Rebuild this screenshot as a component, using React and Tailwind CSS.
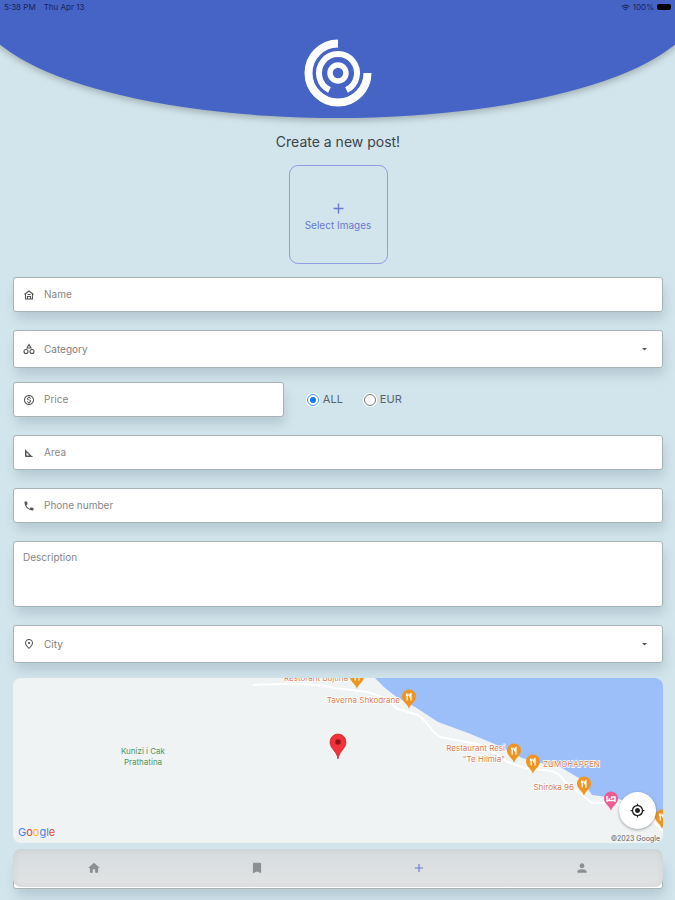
import {
  MdAdd,
  MdBookmark,
  MdHome,
  MdMyLocation,
  MdOutlineMonetizationOn,
  MdOutlinePlace,
  MdPerson,
  MdPhone,
  MdSquareFoot,
  MdWifi,
} from 'react-icons/md';

const fieldBox =
  'flex items-center rounded-[3px] border border-[#a9b3b6] bg-white shadow-[2px_8px_12px_-1px_rgba(60,90,110,0.2)]';
const fieldText =
  'w-full min-w-0 bg-transparent text-[10px] text-[#808080] outline-none placeholder:text-[#868686]';

const places = [
  { x: 344, y: -1, label: ['Restorant Bujtina'], lx: 335, ly: 3 },
  { x: 396, y: 19, label: ['Taverna Shkodrane'], lx: 387, ly: 25 },
  { x: 501, y: 73, label: ['Restaurant Resi', '"Te Hilmia"'], lx: 492, ly: 73 },
  { x: 520, y: 84, label: ['ZUMOHAPPEN'], lx: 530, ly: 89, side: 'start' },
  { x: 571, y: 106, label: ['Shiroka 96'], lx: 561, ly: 112 },
  { x: 649, y: 139, label: [], lx: 0, ly: 0 },
];

const tabs = [
  { name: 'Home', Icon: MdHome },
  { name: 'Saved', Icon: MdBookmark },
  { name: 'New post', Icon: MdAdd, active: true },
  { name: 'Profile', Icon: MdPerson },
];

function HouseIcon({ size, className }) {
  return (
    <svg width={size} height={size} viewBox="0 0 24 24" className={className} fill="none" stroke="currentColor" strokeWidth="2.2">
      <path d="M3 11L12 4l9 7" />
      <path d="M5 9.500V20h14V9.500" />
      <path d="M9 20v-5h6v5M9 11h6" />
    </svg>
  );
}

function ShapesIcon({ size, className }) {
  return (
    <svg width={size} height={size} viewBox="0 0 24 24" className={className} fill="none" stroke="currentColor" strokeWidth="2.2">
      <path d="M12 3l4 7H8z" />
      <circle cx="6" cy="17" r="4" />
      <circle cx="18" cy="17" r="4" />
    </svg>
  );
}

function Logo() {
  return (
    <svg width="68" height="68" viewBox="-34 -34 68 68" fill="none" stroke="#fff" aria-hidden="true">
      <path d="M0 -29.5A29.5 29.5 0 1 0 29.5 0" strokeWidth="8" />
      <path d="M-8.5 17A19 19 0 1 1 8.5 17" strokeWidth="6" />
      <circle r="8" strokeWidth="5.5" />
    </svg>
  );
}

function Header() {
  return (
    <header className="overflow-hidden pb-3">
      <div className="-mx-[3.5%] rounded-b-[50%_97%] bg-[#4663c6] px-[3.5%] pb-[11px] shadow-[0_3px_6px_rgba(70,80,80,0.35)]">
        <div className="flex h-[14px] items-center justify-between px-1 text-[8px] text-[#16245c]">
          <div className="flex gap-2">
            <span>5:38 PM</span>
            <span>Thu Apr 13</span>
          </div>
          <div className="flex items-center gap-[3px]">
            <MdWifi size={9} />
            <span>100%</span>
            <span className="h-[6px] w-[14px] rounded-[2px] bg-black" />
          </div>
        </div>
        <div className="flex justify-center pt-[25px]">
          <Logo />
        </div>
      </div>
    </header>
  );
}

function TextField({ icon: Icon, label, type = 'text', className = 'w-full' }) {
  return (
    <div className={`${fieldBox} h-[35px] px-[9px] ${className}`}>
      <Icon size={12} className="mr-[9px] shrink-0 text-[#555]" />
      <input type={type} aria-label={label} placeholder={label} className={fieldText} />
    </div>
  );
}

function SelectField({ icon: Icon, label }) {
  return (
    <div className={`${fieldBox} h-[38px] w-full px-[9px]`}>
      <Icon size={12} className="mr-[9px] shrink-0 text-[#555]" />
      <select aria-label={label} className={`${fieldText} appearance-none`} defaultValue="">
        <option value="">{label}</option>
      </select>
      <svg width="5" height="3" viewBox="0 0 5 3" className="mr-[6px] shrink-0">
        <path d="M0 0h5L2.500 2.500z" fill="#555" />
      </svg>
    </div>
  );
}

function Currency({ name, defaultChecked }) {
  return (
    <label className="flex items-center gap-[3px] text-[11px] text-[#56646b]">
      <span className="flex rounded-full bg-white p-px">
        <input
          type="radio"
          name="currency"
          defaultChecked={defaultChecked}
          className="peer size-3 appearance-none rounded-full border border-[#777] bg-white p-[2px] checked:border-[#3d95f5] checked:bg-[#0b7cf5] checked:bg-clip-content"
        />
      </span>
      {name}
    </label>
  );
}

function Fork() {
  return (
    <path
      d="M-2.5 -3.5v2.5M-1 -3.5v2.5M-3 -1.5h2.5M-1.8 -1.5v5M2 3.5v-7c-1.5 1-1.5 3-1 4"
      stroke="#fff"
      strokeWidth="1.2"
      fill="none"
    />
  );
}

function MapView() {
  return (
    <div className="relative mt-[15px] h-[165px] overflow-hidden rounded-[8px] bg-[#f0f3f4]">
      <svg
        className="h-full w-full"
        viewBox="0 0 650 165"
        preserveAspectRatio="xMidYMid slice"
        role="img"
        aria-label="Map"
      >
        <path
          d="M362 0L372 10L385 20L402 29L425 44L455 55L489 69L509 80L532 86L549 90L569 102L579 117L602 120L632 129L650 149V0Z"
          fill="#9dbff9"
        />
        <path
          d="M240 7Q300 4 322 10L355 14L372 20L385 31L405 37Q412 42 419 52Q424 59 432 60L469 67L495 84L512 90L539 93Q548 96 552 104L569 117L579 125L599 125L632 135L650 153"
          fill="none"
          stroke="#fff"
          strokeWidth="2"
        />
        <g fontSize="8" fill="#d9804f" stroke="#fff" strokeWidth="1.5" paintOrder="stroke">
          {places.map(({ label, lx, ly, side }) =>
            label.map((line, i) => (
              <text key={line} x={lx} y={ly + i * 11} textAnchor={side || 'end'}>
                {line}
              </text>
            ))
          )}
        </g>
        {places.map(({ x, y }) => (
          <g key={x} transform={`translate(${x} ${y})`}>
            <path d="M0 12C-1 7 -7 5 -7 -0.5A7 7 0 0 1 7 -0.5C7 5 1 7 0 12Z" fill="#ee951f" />
            <Fork />
          </g>
        ))}
        <g transform="translate(598 121)">
          <path d="M0 12C-1 7 -7 5 -7 -0.5A7 7 0 0 1 7 -0.5C7 5 1 7 0 12Z" fill="#eb5b94" />
          <path d="M-4 -3v6M-4 1.5h8v1.5M-2.5 0h1.5M0.5 0v-2h3.5V1" stroke="#fff" strokeWidth="1.4" fill="none" />
        </g>
        <g transform="translate(325 64)">
          <path
            d="M0 17C-1 9 -8 7 -8 0A8 8 0 0 1 8 0C8 7 1 9 0 17Z"
            fill="#f0323a"
            stroke="#c5221f"
            strokeWidth="0.7"
          />
          <circle r="2.7" fill="#8c1515" />
        </g>
        <g fontSize="8" fill="#4c9565" textAnchor="middle">
          <text x="130" y="76">Kunizi i Cak</text>
          <text x="130" y="87">Prathatina</text>
        </g>
      </svg>
      <div className="absolute bottom-1 left-[5px] text-[11px] leading-[14px]">
        <span className="text-[#4285f4]">G</span>
        <span className="text-[#ea4335]">o</span>
        <span className="text-[#fbbc05]">o</span>
        <span className="text-[#4285f4]">g</span>
        <span className="text-[#34a853]">l</span>
        <span className="text-[#ea4335]">e</span>
      </div>
      <span className="absolute right-[3px] bottom-0 text-[7px] leading-[9px] text-[#666]">
        ©2023 Google
      </span>
      <button
        type="button"
        aria-label="My location"
        className="absolute right-[7px] bottom-[14px] flex size-[37px] items-center justify-center rounded-full bg-white text-[#222] shadow-[0_1px_3px_rgba(0,0,0,0.35)]"
      >
        <MdMyLocation size={15} />
      </button>
    </div>
  );
}

function TabBar() {
  return (
    <nav className="z-10 col-start-1 row-start-1 mb-[2px] flex h-[38px] rounded-[8px] bg-linear-to-b from-[#d6dcde] to-[#e2e3e4] shadow-[inset_0_0_6px_rgba(120,130,130,0.15)]">
      {tabs.map(({ name, Icon, active }) => (
        <a
          key={name}
          href="#"
          aria-label={name}
          className={`flex flex-1 items-center justify-center ${active ? 'text-[#6a7bd0]' : 'text-[#8c8f91]'}`}
        >
          <Icon size={14} />
        </a>
      ))}
    </nav>
  );
}

export default function App() {
  return (
    <div className="min-h-screen bg-[#d3e5ec] font-['Inter','Liberation_Sans',sans-serif]">
      <Header />
      <main className="pr-3 pb-[11px] pl-[13px]">
        <h1 className="pt-[2px] text-center text-[14px] leading-5 text-[#3b4449]">
          Create a new post!
        </h1>
        <button
          type="button"
          className="mx-auto mt-[13px] flex size-[99px] flex-col items-center justify-center rounded-[9px] border border-[#8e9ee0] pt-[3px] text-[10px] leading-4 text-[#6878cc]"
        >
          <MdAdd size={17} />
          Select Images
        </button>

        <form className="mt-[13px] flex flex-col">
          <TextField icon={HouseIcon} label="Name" />
          <div className="mt-[18px]">
            <SelectField icon={ShapesIcon} label="Category" />
          </div>
          <div className="mt-[14px] flex items-center">
            <TextField icon={MdOutlineMonetizationOn} label="Price" className="w-5/12" />
            <div className="ml-[22px] flex gap-5">
              <Currency name="ALL" defaultChecked />
              <Currency name="EUR" />
            </div>
          </div>
          <div className="mt-[18px] flex flex-col gap-[18px]">
            <TextField icon={MdSquareFoot} label="Area" />
            <TextField icon={MdPhone} label="Phone number" type="tel" />
            <div className={`${fieldBox} h-[66px] px-[9px] py-2`}>
              <textarea
                aria-label="Description"
                placeholder="Description"
                className={`${fieldText} h-full resize-none`}
              />
            </div>
            <SelectField icon={MdOutlinePlace} label="City" />
          </div>
        </form>

        <MapView />

        <div className="mt-[6px] grid items-end">
          <div className={`${fieldBox} col-start-1 row-start-1 h-[34px]`} />
          <TabBar />
        </div>
      </main>
    </div>
  );
}
